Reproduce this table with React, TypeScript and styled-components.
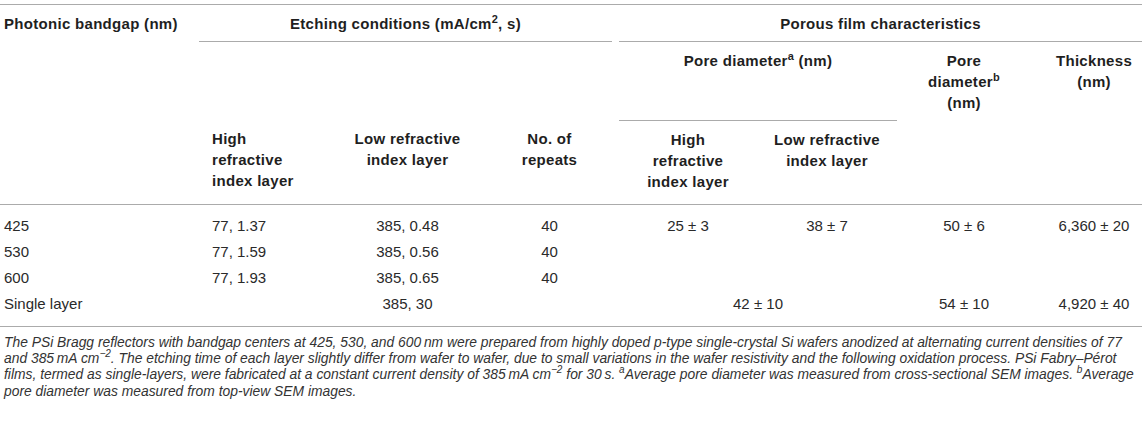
import styled, { createGlobalStyle } from 'styled-components'

const GlobalStyle = createGlobalStyle`
  body {
    margin: 0;
    background: #fff;
    font-family: "Liberation Sans", Arial, sans-serif;
    color: #1f1f1f;
  }
`

const RULE = '#ababab'

const Page = styled.div`
  width: 1142px;
  padding-top: 4px;
`

const Table = styled.table`
  width: 1142px;
  table-layout: fixed;
  border-collapse: collapse;
  border-top: 1px solid ${RULE};
  border-bottom: 1px solid ${RULE};
  font-size: 15px;
`

const Head = styled.thead`
  border-bottom: 1px solid ${RULE};
`

const Th = styled.th<{ $align?: 'left' | 'center'; $pl?: number; $ruled?: boolean; $pb?: number }>`
  font-weight: bold;
  line-height: 21px;
  letter-spacing: 0.3px;
  text-align: ${p => p.$align ?? 'center'};
  vertical-align: top;
  padding: 8px 0 ${p => p.$pb ?? 7}px ${p => p.$pl ?? 0}px;
  border-bottom: ${p => (p.$ruled ? `1px solid ${RULE}` : 'none')};

  sup {
    font-size: 11px;
    line-height: 0;
  }
`

const Group = styled.div<{ $gapRight?: number }>`
  padding-bottom: 7px;
  margin-right: ${p => p.$gapRight ?? 0}px;
  border-bottom: 1px solid ${RULE};
`

const Body = styled.tbody`
  tr:first-child td {
    padding-top: 12px;
  }
  tr:last-child td {
    padding-bottom: 13px;
  }
`

const Td = styled.td<{ $align?: 'left' | 'center'; $pl?: number }>`
  line-height: 18px;
  color: #2a2a2a;
  text-align: ${p => p.$align ?? 'center'};
  padding: 4px 0 4px ${p => p.$pl ?? 0}px;
  white-space: nowrap;
`

const Note = styled.p`
  margin: 7px 0 0 4px;
  font-size: 13.85px;
  line-height: 16.4px;
  font-style: italic;
  color: #333;
  white-space: nowrap;

  sup {
    font-size: 10px;
    line-height: 0;
  }
`

const widths = [199, 136, 145, 139, 138, 140, 134, 111]

type Row = { label: string; cells: string[] }

const rows: Row[] = [
  { label: '425', cells: ['77, 1.37', '385, 0.48', '40', '25 ± 3', '38 ± 7', '50 ± 6', '6,360 ± 20'] },
  { label: '530', cells: ['77, 1.59', '385, 0.56', '40', '', '', '', ''] },
  { label: '600', cells: ['77, 1.93', '385, 0.65', '40', '', '', '', ''] },
]

export default function App() {
  return (
    <Page>
      <GlobalStyle />
      <Table>
        <colgroup>
          {widths.map((w, i) => (
            <col key={i} style={{ width: w }} />
          ))}
        </colgroup>
        <Head>
          <tr>
            <Th rowSpan={3} $align="left" $pl={4}>Photonic bandgap (nm)</Th>
            <Th colSpan={3} $pb={0}>
              <Group $gapRight={7}>
                Etching conditions (mA/cm<sup>2</sup>, s)
              </Group>
            </Th>
            <Th colSpan={5} $pb={0}>
              <Group>Porous film characteristics</Group>
            </Th>
          </tr>
          <tr>
            <Th colSpan={3} />
            <Th colSpan={2} $ruled>
              Pore diameter<sup>a</sup> (nm)
            </Th>
            <Th>
              Pore
              <br />
              diameter<sup>b</sup>
              <br />
              (nm)
            </Th>
            <Th $pl={15}>
              Thickness
              <br />
              (nm)
            </Th>
          </tr>
          <tr>
            <Th $align="left" $pl={13} $pb={12}>
              High
              <br />
              refractive
              <br />
              index layer
            </Th>
            <Th $pb={12}>
              Low refractive
              <br />
              index layer
            </Th>
            <Th $pb={12}>
              No. of
              <br />
              repeats
            </Th>
            <Th $pb={12}>
              High
              <br />
              refractive
              <br />
              index layer
            </Th>
            <Th $pb={12}>
              Low refractive
              <br />
              index layer
            </Th>
            <Th $pb={12} />
            <Th $pb={12} />
          </tr>
        </Head>
        <Body>
          {rows.map(r => (
            <tr key={r.label}>
              <Td $align="left" $pl={4}>{r.label}</Td>
              <Td $align="left" $pl={13}>{r.cells[0]}</Td>
              {r.cells.slice(1, 6).map((c, i) => (
                <Td key={i}>{c}</Td>
              ))}
              <Td $pl={15}>{r.cells[6]}</Td>
            </tr>
          ))}
          <tr>
            <Td $align="left" $pl={4}>Single layer</Td>
            <Td />
            <Td>385, 30</Td>
            <Td />
            <Td colSpan={2}>42 ± 10</Td>
            <Td>54 ± 10</Td>
            <Td $pl={15}>4,920 ± 40</Td>
          </tr>
        </Body>
      </Table>
      <Note>
        The PSi Bragg reflectors with bandgap centers at 425, 530, and 600{'\u2009'}nm were prepared from highly doped
        p-type single-crystal Si wafers anodized at alternating current densities of 77
        <br />
        and 385{'\u2009'}mA cm<sup>−2</sup>. The etching time of each layer slightly differ from wafer to wafer, due to
        small variations in the wafer resistivity and the following oxidation process. PSi Fabry–Pérot
        <br />
        films, termed as single-layers, were fabricated at a constant current density of 385{'\u2009'}mA cm<sup>−2</sup>{' '}
        for 30{'\u2009'}s. <sup>a</sup>Average pore diameter was measured from cross-sectional SEM images.{' '}
        <sup>b</sup>Average
        <br />
        pore diameter was measured from top-view SEM images.
      </Note>
    </Page>
  )
}
